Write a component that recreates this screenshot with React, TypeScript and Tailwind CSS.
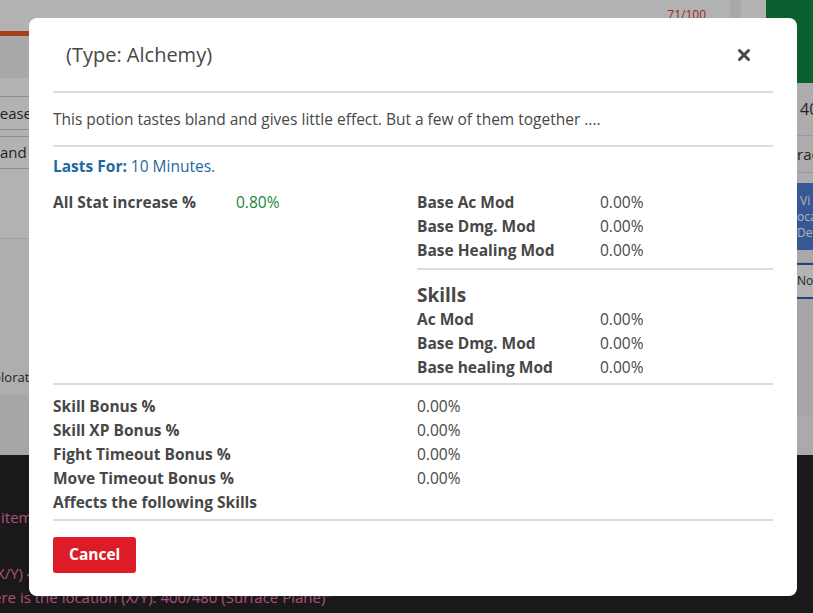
import { X } from 'lucide-react';

interface StatRow {
  label: string;
  value: string;
}

const baseMods: StatRow[] = [
  { label: 'Base Ac Mod', value: '0.00%' },
  { label: 'Base Dmg. Mod', value: '0.00%' },
  { label: 'Base Healing Mod', value: '0.00%' },
];

const skillMods: StatRow[] = [
  { label: 'Ac Mod', value: '0.00%' },
  { label: 'Base Dmg. Mod', value: '0.00%' },
  { label: 'Base healing Mod', value: '0.00%' },
];

const bonuses: StatRow[] = [
  { label: 'Skill Bonus %', value: '0.00%' },
  { label: 'Skill XP Bonus %', value: '0.00%' },
  { label: 'Fight Timeout Bonus %', value: '0.00%' },
  { label: 'Move Timeout Bonus %', value: '0.00%' },
];

function Row({ label, value, valueClass = 'text-[#474747]', labelWidth = 'w-[183px]' }: StatRow & { valueClass?: string; labelWidth?: string }) {
  return (
    <div className="flex h-6 items-center">
      <span className={`${labelWidth} shrink-0 font-bold text-[#474747]`}>{label}</span>
      <span className={valueClass}>{value}</span>
    </div>
  );
}

function BackgroundPage() {
  return (
    <div className="flex h-full w-full flex-col bg-white">
      <div className="flex h-[455px]">
        {/* main panel */}
        <div className="flex w-[766px] shrink-0 flex-col whitespace-nowrap">
          <div className="flex h-[31px] items-start justify-end pr-[25px]">
            <span className="pt-[7px] text-[12px] leading-[16px] text-[#d0402a]">71/100</span>
            <div className="ml-[24px] h-full w-[11px] bg-[#f2f2f2]" />
          </div>
          <div className="h-[5px] w-[71%] bg-[#ef5a2c]" />
          <div className="h-[42px] bg-[#f2f2f2]" />
          <div className="flex flex-col bg-white pt-[18px] text-[15px] text-[#333]">
            <div className="border-t border-[#ccc]" />
            <div className="-ml-[27px] flex h-[32px] items-center">Increase</div>
            <div className="border-t border-[#ccc]" />
            <div className="h-[6px]" />
            <div className="border-t border-[#ccc]" />
            <div className="flex h-[31px] items-center">and Fame</div>
            <div className="border-t border-[#ccc]" />
          </div>
          <div className="h-[69px] bg-white" />
          <div className="h-[123px] border-t border-[#e6e6e6] bg-[#fafafa]" />
          <div className="-ml-[21px] flex h-[34px] items-center bg-[#fafafa] text-[13px] text-[#333]">exploration</div>
          <div className="flex-1 bg-[#eeeeee]" />
        </div>
        {/* right sidebar */}
        <div className="flex min-w-0 flex-1 flex-col overflow-hidden whitespace-nowrap text-[#333]">
          <div className="h-[83px] bg-[#0f8a44]" />
          <div className="flex h-[53px] items-center border-b border-[#ddd] bg-[#f7f7f7] pl-[34px] text-[16px]">40</div>
          <div className="flex h-[37px] items-center border-b border-[#ddd] bg-[#f7f7f7] pl-[31px] text-[15px]">rack</div>
          <div className="h-[10px] bg-[#f7f7f7]" />
          <div className="flex h-[67px] flex-col justify-center bg-[#4f7fd6] pl-[31px] text-[12px] leading-[16px] text-white">
            <span className="pl-[3px]">Vi</span>
            <span>oca</span>
            <span>Det</span>
          </div>
          <div className="h-[13px] border-b border-[#ddd] bg-[#f2f2f2]" />
          <div className="flex h-[36px] items-center border-y-2 border-[#2f5fc0] bg-white pl-[31px] text-[12px]">Nor</div>
          <div className="h-[118px] bg-[#eeeeee]" />
          <div className="flex-1 bg-[#f4f4f4]" />
        </div>
      </div>
      <div className="flex flex-1 flex-col bg-[#252525] text-[15px] text-[#f472b6]">
        <div className="h-[50px]" />
        <div className="flex h-[24px] items-center pl-[1px]">item</div>
        <div className="h-[32px]" />
        <div className="-ml-[4px] flex h-[24px] items-center">X/Y) 400/480</div>
        <div className="-ml-[18px] flex h-[24px] items-center whitespace-nowrap">Here is the location (X/Y): 400/480 (Surface Plane)"</div>
      </div>
    </div>
  );
}

export default function App() {
  return (
    <div className="relative h-[613px] w-[813px] overflow-hidden" style={{ fontFamily: '"Open Sans", Lato, sans-serif' }}>
      <BackgroundPage />
      {/* backdrop */}
      <div className="absolute inset-0 bg-black/30" />

      <div className="absolute left-[29px] top-[18px] flex w-[768px] flex-col rounded-[8px] bg-white px-6 pb-[23px] text-[15.5px] text-[#474747]">
        <div className="flex h-[73px] items-center justify-between">
          <h2 className="pl-[13px] text-[20px] text-[#474747]">(Type: Alchemy)</h2>
          <button className="mr-[20px] text-[#474747]">
            <X size={18} strokeWidth={4} />
          </button>
        </div>
        <div className="border-t-2 border-[#dcdcdc]" />
        <p className="py-[14px] leading-6">
          This potion tastes bland and gives little effect. But a few of them together ....
        </p>
        <div className="border-t-2 border-[#dcdcdc]" />

        <div className="mt-2 flex h-6 items-center text-[#1d6aa0]">
          <span className="mr-1 font-bold">Lasts For:</span>
          <span>10 Minutes.</span>
        </div>

        <div className="mt-3 grid grid-cols-[364px_1fr]">
          <div>
            <Row label="All Stat increase %" value="0.80%" valueClass="text-[#16873d]" />
          </div>
          <div className="flex flex-col">
            {baseMods.map((r) => (
              <Row key={r.label} {...r} />
            ))}
            <div className="mt-[5px] border-t-2 border-[#dcdcdc]" />
            <h3 className="mt-[12px] text-[19px] font-bold leading-[26px] text-[#474747]">Skills</h3>
            {skillMods.map((r) => (
              <Row key={r.label} {...r} />
            ))}
          </div>
        </div>
        <div className="mt-[3px] border-t-2 border-[#dcdcdc]" />

        <div className="mt-[10px] flex flex-col">
          {bonuses.map((r) => (
            <Row key={r.label} {...r} labelWidth="w-[364px]" />
          ))}
          <div className="flex h-6 items-center font-bold">Affects the following Skills</div>
        </div>
        <div className="mt-[4px] border-t-2 border-[#dcdcdc]" />

        <div className="mt-4">
          <button className="h-9 rounded-[3px] bg-[#dd1c27] px-4 font-bold text-white">Cancel</button>
        </div>
      </div>
    </div>
  );
}
